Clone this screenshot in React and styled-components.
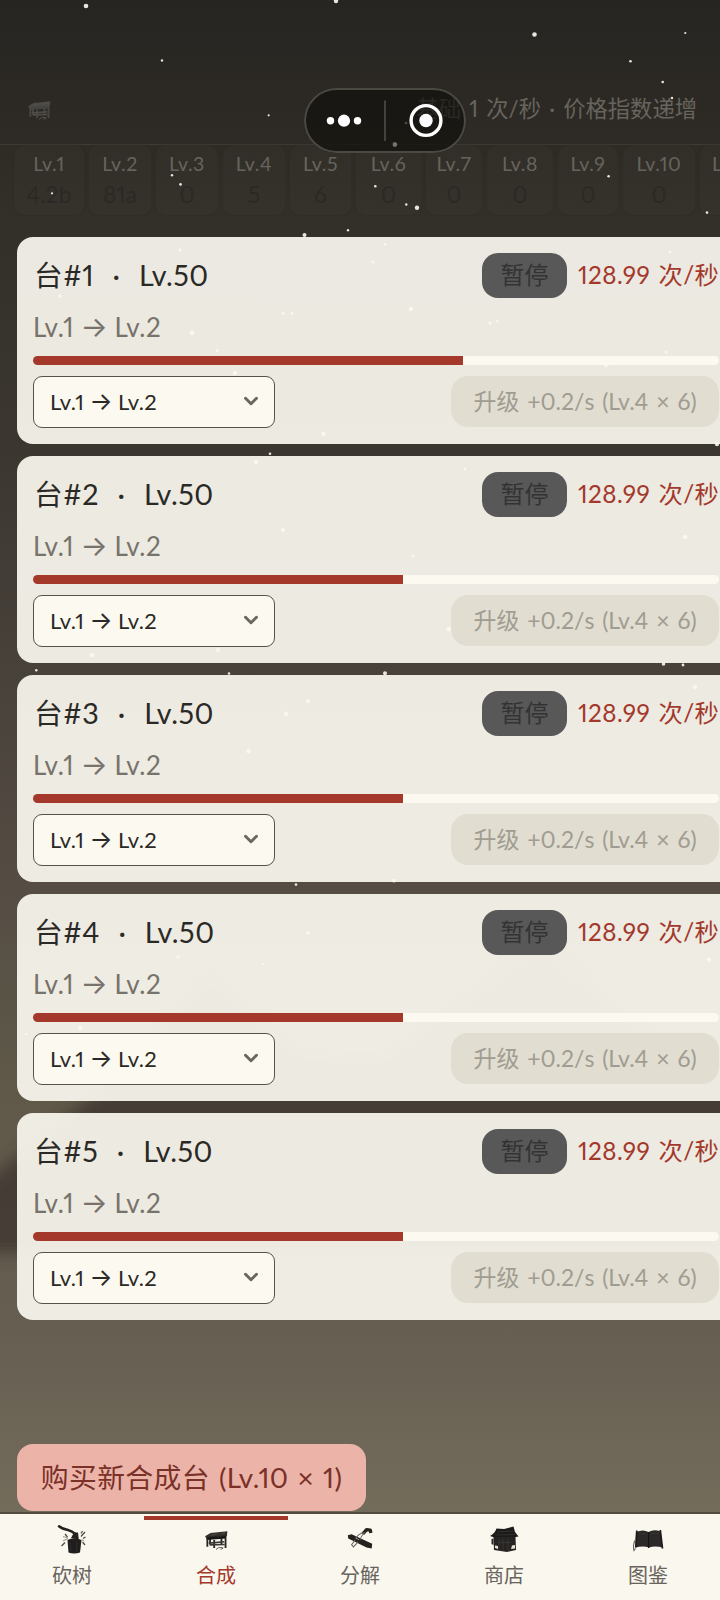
import React, { useState } from "react";
import styled, { createGlobalStyle } from "styled-components";
import { ChevronDown } from "lucide-react";

const levels = [
  { name: 'Lv.1', count: '4.2b', width: 70 },
  { name: 'Lv.2', count: '81a', width: 62 },
  { name: 'Lv.3', count: '0', width: 62 },
  { name: 'Lv.4', count: '5', width: 62 },
  { name: 'Lv.5', count: '6', width: 61 },
  { name: 'Lv.6', count: '0', width: 65 },
  { name: 'Lv.7', count: '0', width: 56 },
  { name: 'Lv.8', count: '0', width: 66 },
  { name: 'Lv.9', count: '0', width: 60 },
  { name: 'Lv.10', count: '0', width: 72 },
  { name: 'Lv.11', count: '0', width: 64 },
];

const benches = [
  { id: 1, progress: 62.75 },
  { id: 2, progress: 53.94 },
  { id: 3, progress: 53.94 },
  { id: 4, progress: 53.94 },
  { id: 5, progress: 53.94 },
];

// x, y, radius
const stars = [
  [86, 6, 2.3], [336, 1, 2.2], [162, 60.5, 1.2], [268.7, 115.3, 1.1], [534.5, 34.5, 2.3],
  [685.3, 33, 1.1], [630.5, 61.3, 1.3], [662.7, 82, 1.3], [672, 98, 1.2], [52, 193.3, 1.1],
  [172, 175.3, 1.2], [180.5, 184.4, 1.3], [304.5, 235, 2], [348, 230.3, 1.2], [375.3, 186.3, 1.3],
  [406.3, 204.5, 1.2], [417, 207.8, 2.2], [608.6, 176.3, 1.3], [707, 212.6, 1.3], [394.5, 144.5, 2.3],
  [406, 123, 1.3], [180, 250, 1.5], [60, 296, 1.6], [192, 332.6, 2.4], [217, 350.5, 1.6],
  [235, 373, 2.2], [323.5, 433.7, 2.2], [283, 313.5, 1.4], [292, 313.5, 1.4], [385, 244.5, 1.4],
  [373, 262, 1.4], [411, 309, 2.2], [490, 323, 1.5], [497, 321, 1.2], [666, 352, 1.6],
  [606, 365, 2.2], [717, 444, 2.2], [670, 252, 1.2], [270, 453.7, 1.3], [256, 462, 2.1],
  [283, 530, 2.1], [685, 537, 2.3], [449, 629, 2.3], [218, 650, 2.2], [92, 655, 2.3],
  [36.3, 670.3, 1.3], [229, 673.5, 1.3], [385, 673.3, 2], [663.5, 664, 1.8], [683, 665, 1.4],
  [308, 701, 2.1], [286, 714, 2.2], [248.5, 751, 2.3], [695, 687, 2.3], [296, 884.6, 1.3],
  [394, 880.5, 2.1], [308, 933, 1.8], [178, 957, 1.8], [263, 964, 1.2], [709, 959.5, 2.2],
  [80.3, 1028, 2.3], [26, 1034, 1.3], [413, 556, 1.4], [465, 469, 1.4],
];

function TableIcon() {
  return (
    <svg viewBox="-1.5 -2.5 33 33" width="30" height="30">
      <path d="M3 11 L9 7.5 L27.5 5.5 L27 11 L4 12.5 Z" fill="#302e2c" />
      <path d="M4 12 L26.5 10.5 L26 13.5 L5 15 Z" fill="#181716" />
      <path d="M5.5 13 V22.5 M8.5 14 V20 M13 15 V24 M25.5 12 V24 M21 13 V20" stroke="#262422" strokeWidth="2" />
      <path d="M7 18.5 L24 17 M8 20.5 L24.5 20" stroke="#3b3834" strokeWidth="1.8" />
      <path d="M15 25.5 L18 23.5 L22.5 23.3 M20 25.5 L23 24" stroke="#5a5550" strokeWidth="1" fill="none" />
      <path d="M9 9.7 L15 9 M20 8.5 L25 7.3" stroke="#5c5751" strokeWidth=".8" />
      <circle cx="16.5" cy="8.3" r="1" fill="#69332a" />
    </svg>
  );
}

function AxeIcon() {
  return (
    <svg viewBox="0 -.5 30 30" width="30" height="30">
      <path d="M2 1.8 Q5 4.5 11 5.5 Q15 6.5 19 10" stroke="#24211f" strokeWidth="2.5" fill="none" strokeLinecap="round" />
      <path d="M17 8 L21 8 L21.8 15 L14 13.5 Z" fill="#24211f" />
      <path d="M10.5 15.5 Q17 12 24.5 15.5 L23 28 Q17 30 11.5 28 Z" fill="#201e1c" />
      <path d="M13 18 L14 26 M20 17 L19.5 27" stroke="#35322f" strokeWidth=".7" />
      <path d="M4.5 21.5 L8 18 M8 9.5 L10.5 12.5 M24 12 L28 7.5 M26 14 L28.5 12.5 M25.5 17.5 L28 20.5 M24 9 L25.5 6.5" stroke="#4a4641" strokeWidth="1.2" />
      <path d="M6 16.5 L11 14 M6 12 L11 13.5 M24.5 15.5 L27 16" stroke="#a09a90" strokeWidth="1.1" />
    </svg>
  );
}

function SplitIcon() {
  return (
    <svg viewBox="-1 -2 32 32" width="30" height="30">
      <path d="M2 10 L6 9 L28 19 L27.5 24 L22 23 L2.5 13.5 Z" fill="#24211f" />
      <path d="M18 8.5 L22 4 L26 4.5 L26.5 7.5" stroke="#24211f" strokeWidth="3.6" fill="none" strokeLinejoin="round" />
      <path d="M20 7 Q13 8 11 13 M20 8 Q17 9 15 15 M13 17 L8 22.5 L6 20 L10 15" stroke="#68635c" strokeWidth="1.1" fill="none" />
      <path d="M10 12.8 L14 14.8" stroke="#9b958c" strokeWidth="1" />
    </svg>
  );
}

function ShopIcon() {
  return (
    <svg viewBox="0 -1 30 30" width="30" height="30">
      <path d="M1 11 Q6 8 7.5 3.5 L15 4 L24.5 1.5 L26 7 L29.5 11.5 L24 12.5 L7 13 Z" fill="#1d1b1a" />
      <path d="M4.5 12 H26.5 L27 25 L18 27 L5 25 Z" fill="#262422" />
      <path d="M2.5 14 L4.5 13.5 V20 L2.5 19 Z" fill="#2a2826" />
      <path d="M6 20.5 L9 21 V24 L6 23 Z M23 20.5 L26 20 V23.5 L22 24 Z" fill="#e8e3d9" />
      <path d="M10 14 V25 M14 14 V26 M19 14 V26 M10 17.5 H22" stroke="#3c3936" strokeWidth=".8" />
      <path d="M8 7 L24 6 M6 10 L26 9.5" stroke="#393633" strokeWidth=".8" />
    </svg>
  );
}

function BookIcon() {
  return (
    <svg viewBox="0 -1.5 34 30" width="34" height="30">
      <path d="M5 6.5 Q12 3.5 17.5 6.5 Q23 3.5 29.5 6 L31.5 22 Q24 20 18 22 Q12 20 4.5 22 Z" fill="#2c2a28" />
      <path d="M5.8 5 L4.8 22 M29.3 4.5 L31.5 23" stroke="#1c1b1a" strokeWidth="1.7" />
      <path d="M17.6 6.5 V22.5" stroke="#151413" strokeWidth="1.2" />
      <path d="M8 8.5 L15 8 M20 8 L28 8" stroke="#3a3835" strokeWidth=".8" />
      <path d="M4.5 14 Q1.5 19 3 25 L4.5 23" stroke="#69645d" strokeWidth="1.1" fill="none" />
    </svg>
  );
}

const tabs = [
  { name: '砍树', icon: AxeIcon },
  { name: '合成', icon: TableIcon },
  { name: '分解', icon: SplitIcon },
  { name: '商店', icon: ShopIcon },
  { name: '图鉴', icon: BookIcon },
];

function Recipe() {
  return <>Lv.1 <Arrow>→</Arrow> Lv.2</>;
}

function Bench({ id, progress }) {
  return (
    <Card>
      <CardTop>
        <CardTitle>
          <span>台#{id}</span>
          <span>·</span>
          <span>Lv.50</span>
        </CardTitle>
        <PauseButton>暂停</PauseButton>
        <Rate>128.99 次/秒</Rate>
      </CardTop>
      <RecipeText><Recipe /></RecipeText>
      <Track>
        <Fill style={{ width: `${progress}%` }} />
      </Track>
      <CardBottom>
        <RecipeSelect>
          <span><Recipe /></span>
          <ChevronDown size={22} strokeWidth={3.2} color="#6b665f" />
        </RecipeSelect>
        <UpgradeButton disabled>升级 +0.2/s (Lv.4 × 6)</UpgradeButton>
      </CardBottom>
    </Card>
  );
}

function App() {
  const [activeTab, setActiveTab] = useState('合成');

  return (
    <>
      <GlobalStyle />
      <Page>
        <Sky viewBox="0 0 720 1600">
          <defs>
            <filter id="soft" x="-20%" y="-50%" width="140%" height="200%">
              <feGaussianBlur stdDeviation="8" />
            </filter>
          </defs>
          <path
            d="M-40 1200 L0 1170 L90 1098 L210 980 L300 1055 L380 1060 L540 950 L640 1030 L760 1060 V1253 H-40 Z"
            fill="#403731"
            opacity=".85"
            filter="url(#soft)"
          />
          {stars.map(([x, y, r]) => (
            <circle key={`${x}-${y}`} cx={x} cy={y} r={r} fill="#e9e6de" />
          ))}
        </Sky>
        <Header>
          <HeaderIcon><TableIcon /></HeaderIcon>
          <HeaderNote>基础 1 次/秒 · 价格指数递增</HeaderNote>
        </Header>
        <Levels>
          {levels.map((level) => (
            <Level key={level.name} $width={level.width}>
              <LevelName>{level.name}</LevelName>
              <LevelCount>{level.count}</LevelCount>
            </Level>
          ))}
        </Levels>
        <Benches>
          {benches.map((bench) => (
            <Bench key={bench.id} id={bench.id} progress={bench.progress} />
          ))}
        </Benches>
        <BuyButton>购买新合成台 (Lv.10 × 1)</BuyButton>
        <TabBar>
          {tabs.map(({ name, icon: Icon }) => (
            <Tab key={name} $active={activeTab === name} onClick={() => setActiveTab(name)}>
              <Icon />
              <TabName>{name}</TabName>
            </Tab>
          ))}
        </TabBar>
        <Capsule>
          <svg viewBox="0 0 162 65" width="162" height="65">
            <circle cx="26.5" cy="32.7" r="3.7" fill="#fff" />
            <circle cx="40" cy="32.7" r="6.1" fill="#fff" />
            <circle cx="53.5" cy="32.7" r="3.7" fill="#fff" />
            <path d="M81 12.5 V53" stroke="#45423d" strokeWidth="2" />
            <circle cx="122" cy="32.5" r="14.9" fill="none" stroke="#fff" strokeWidth="3.4" />
            <circle cx="122" cy="32.5" r="6.7" fill="#fff" />
            <circle cx="91" cy="56.5" r="2.2" fill="#77746e" />
          </svg>
        </Capsule>
      </Page>
    </>
  );
}

const GlobalStyle = createGlobalStyle`
  * {
    box-sizing: border-box;
  }
  body {
    margin: 0;
    font-family: Lato, "Noto Sans CJK SC", sans-serif;
    font-variant-numeric: proportional-nums;
  }
  button {
    font-family: inherit;
    font-variant-numeric: inherit;
    border: none;
    padding: 0 0 3px;
    white-space: nowrap;
  }
`;

const Page = styled.div`
  position: relative;
  width: 720px;
  height: 1600px;
  overflow: hidden;
  display: flex;
  flex-direction: column;
  background: linear-gradient(
    #262521 0,
    #2c2924 100px,
    #322f29 210px,
    #3b3630 440px,
    #47413a 660px,
    #554c43 885px,
    #5a5447 1000px,
    #605949 1100px,
    #665e51 1330px,
    #736c5b 1510px
  );
`;

const Sky = styled.svg`
  position: absolute;
  top: 0;
  left: 0;
  width: 720px;
  height: 1600px;
`;

const Header = styled.div`
  position: relative;
  flex: none;
  height: 145px;
  padding: 73px 23px 0 23px;
  display: flex;
  align-items: center;
  justify-content: space-between;
  border-bottom: 1px solid #3d3a34;
`;

const HeaderIcon = styled.div`
  display: flex;
  opacity: 0.6;

  svg {
    width: 32px;
    height: 30px;
    filter: invert(0.3);
  }
`;

const HeaderNote = styled.div`
  font-size: 22.3px;
  line-height: 30px;
  word-spacing: 2.5px;
  color: #67645d;
`;

const Levels = styled.div`
  position: relative;
  flex: none;
  display: flex;
  gap: 5px;
  height: 91.5px;
  padding-left: 14px;
`;

const Level = styled.div`
  flex: none;
  width: ${(props) => props.$width}px;
  height: 70px;
  padding-top: 6px;
  border-radius: 10px;
  background: rgba(255, 250, 235, 0.015);
  box-shadow: 0 0 3px rgba(0, 0, 0, 0.06);
  text-align: center;
`;

const LevelName = styled.div`
  font-size: 19.5px;
  line-height: 26px;
  letter-spacing: 0.6px;
  color: #67635c;
`;

const LevelCount = styled.div`
  margin-top: 4px;
  font-size: 23px;
  line-height: 26px;
  color: #2b2925;
`;

const Benches = styled.div`
  position: relative;
  display: flex;
  flex-direction: column;
  gap: 12px;
  width: 718px;
  margin-left: 17px;
`;

const Card = styled.div`
  height: 207.1px;
  padding: 16px;
  border-radius: 16px;
  background: rgba(250, 247, 239, 0.93);
`;

const CardTop = styled.div`
  display: flex;
  align-items: center;
  height: 45px;
`;

const CardTitle = styled.div`
  flex: 1;
  display: flex;
  gap: 18.5px;
  padding-left: 1px;
  font-size: 28.7px;
  line-height: 40px;
  letter-spacing: 0.5px;
  color: #2b2926;
`;

const PauseButton = styled.button`
  width: 85px;
  height: 45px;
  border-radius: 16px;
  background: #585858;
  color: #333;
  font-size: 24px;
`;

const Rate = styled.div`
  width: 141px;
  margin-left: 11px;
  font-size: 24.3px;
  line-height: 36px;
  letter-spacing: 0.45px;
  word-spacing: 1.5px;
  white-space: nowrap;
  color: #a3382b;
`;

const Arrow = styled.span`
  margin: 0 -1px;
  font-family: Inter, sans-serif;
  font-size: 1.1em;
  line-height: 1;
`;

const RecipeText = styled.div`
  height: 58.5px;
  padding-top: 10px;
  font-size: 26px;
  line-height: 38px;
  letter-spacing: 0.6px;
  color: #77726b;
`;

const Track = styled.div`
  height: 9px;
  border-radius: 5px;
  overflow: hidden;
  background: #fcf9f0;
`;

const Fill = styled.div`
  height: 100%;
  background: #a4382a;
`;

const CardBottom = styled.div`
  display: flex;
  align-items: center;
  justify-content: space-between;
  margin-top: 10.5px;
`;

const RecipeSelect = styled.div`
  display: flex;
  align-items: center;
  justify-content: space-between;
  width: 242px;
  height: 52px;
  padding: 0 12px 1px 16px;
  border: 1.5px solid #57524b;
  border-radius: 9px;
  background: #fcf9f0;
  font-size: 22px;
  letter-spacing: 0.4px;
  color: #2b2926;
`;

const UpgradeButton = styled.button`
  width: 268px;
  height: 51px;
  border-radius: 17px;
  background: #e1ddd0;
  color: #a09c92;
  font-size: 23px;
  word-spacing: 2px;
`;

const BuyButton = styled.button`
  position: relative;
  flex: none;
  width: 349px;
  height: 67px;
  margin: auto 0 1px 17px;
  border-radius: 16px;
  background: #ecb4a9;
  color: #7a3128;
  font-size: 27.8px;
  letter-spacing: 0.4px;
  word-spacing: 1.5px;
`;

const TabBar = styled.div`
  position: relative;
  flex: none;
  display: flex;
  height: 88px;
  border-top: 2.5px solid #514b40;
  background: #faf7ee;
`;

const Tab = styled.div`
  flex: 1;
  display: flex;
  flex-direction: column;
  align-items: center;
  margin-top: 2px;
  padding-top: 4px;
  border-top: 4px solid ${(props) => (props.$active ? '#a3382b' : 'transparent')};
  color: ${(props) => (props.$active ? '#a3382b' : '#67635d')};
`;

const TabName = styled.div`
  margin-top: 6px;
  font-size: 20px;
  line-height: 30px;
`;

// floats over the header like the host app's own menu
const Capsule = styled.div`
  position: absolute;
  top: 88px;
  left: 303.5px;
  width: 162px;
  height: 65px;
  display: flex;
  border-radius: 33px;
  background: rgba(18, 16, 13, 0.72);
  box-shadow: inset 0 0 0 2px #4c4943;
`;

export default App;
